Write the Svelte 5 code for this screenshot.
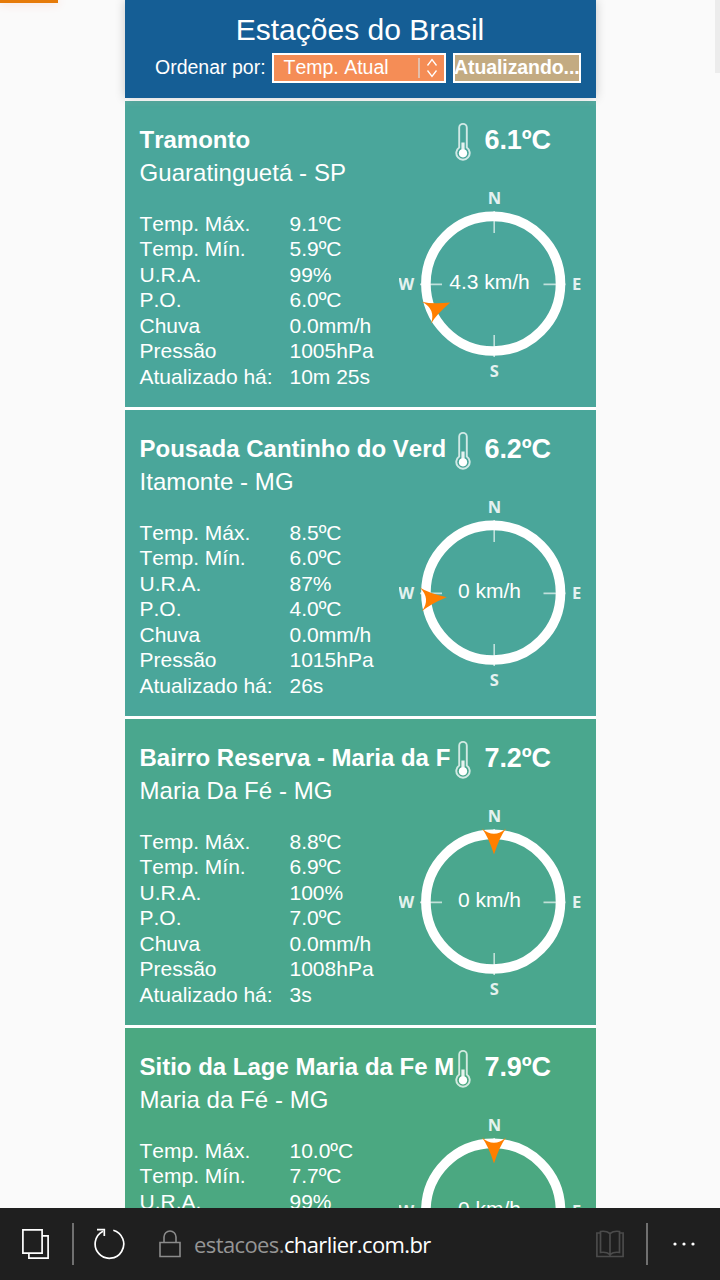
<svelte:head>
    <title>Estações do Brasil</title>
</svelte:head>

<script>
 const url = { sub: 'estacoes.', domain: 'charlier.com.br' };

 let order = 'Temp. Atual';

 // wind is in degrees, 0 = north
 const stations = [
     {
         name: 'Tramonto',
         city: 'Guaratinguetá - SP',
         temp: '6.1ºC',
         color: '#4aa69b',
         wind: 247,
         speed: '4.3 km/h',
         rows: [
             ['Temp. Máx.', '9.1ºC'],
             ['Temp. Mín.', '5.9ºC'],
             ['U.R.A.', '99%'],
             ['P.O.', '6.0ºC'],
             ['Chuva', '0.0mm/h'],
             ['Pressão', '1005hPa'],
             ['Atualizado há:', '10m 25s']
         ]
     },
     {
         name: 'Pousada Cantinho do Verd',
         city: 'Itamonte - MG',
         temp: '6.2ºC',
         color: '#4aa69a',
         wind: 265,
         speed: '0 km/h',
         rows: [
             ['Temp. Máx.', '8.5ºC'],
             ['Temp. Mín.', '6.0ºC'],
             ['U.R.A.', '87%'],
             ['P.O.', '4.0ºC'],
             ['Chuva', '0.0mm/h'],
             ['Pressão', '1015hPa'],
             ['Atualizado há:', '26s']
         ]
     },
     {
         name: 'Bairro Reserva - Maria da F',
         city: 'Maria Da Fé - MG',
         temp: '7.2ºC',
         color: '#4aa78e',
         wind: 0,
         speed: '0 km/h',
         rows: [
             ['Temp. Máx.', '8.8ºC'],
             ['Temp. Mín.', '6.9ºC'],
             ['U.R.A.', '100%'],
             ['P.O.', '7.0ºC'],
             ['Chuva', '0.0mm/h'],
             ['Pressão', '1008hPa'],
             ['Atualizado há:', '3s']
         ]
     },
     {
         name: 'Sitio da Lage Maria da Fe M',
         city: 'Maria da Fé - MG',
         temp: '7.9ºC',
         color: '#4ba881',
         wind: 0,
         speed: '0 km/h',
         rows: [
             ['Temp. Máx.', '10.0ºC'],
             ['Temp. Mín.', '7.7ºC'],
             ['U.R.A.', '99%']
         ]
     }
 ];
</script>

<div class="screen">
    <div class="page">
        <div class="progress"></div>
        <div class="scrollbar"></div>
        <div class="content">
            <header>
                <h1>Estações do Brasil</h1>
                <div class="controls">
                    <span class="label">Ordenar por:</span>
                    <div class="select">
                        <span>{order}</span>
                        <svg width="22" height="22" viewBox="0 0 22 22" fill="none">
                            <path d="M1 1V21" stroke="#ddd5d0" stroke-width="1.4" />
                            <path d="M9.5 8.5L14 2.500L18.500 8.500M9.500 13.500L14 19.500L18.500 13.500" stroke="#fff" stroke-width="1.300" />
                        </svg>
                    </div>
                    <button>Atualizando...</button>
                </div>
            </header>

            {#each stations as station}
                <section class="card" style="background-color: {station.color}">
                    <div class="info">
                        <h2>{station.name}</h2>
                        <p class="city">{station.city}</p>
                        <dl>
                            {#each station.rows as [label, value]}
                                <dt>{label}</dt>
                                <dd>{value}</dd>
                            {/each}
                        </dl>
                    </div>
                    <div class="now">
                        <div class="temp">
                            <svg width="16" height="40" viewBox="0 0 16 40">
                                <path d="M4.200 25.500V5.700a3.800 3.800 0 0 1 7.600 0V25.500a6.700 6.700 0 1 1-7.600 0z" fill="none" stroke="#fff" stroke-opacity="0.75" stroke-width="1.900" />
                                <path d="M8 20.500V30" stroke="#fff" stroke-opacity="0.85" stroke-width="3.200" />
                                <circle cx="8" cy="31.300" r="4.100" fill="#fff" />
                            </svg>
                            <strong>{station.temp}</strong>
                        </div>
                        <svg class="compass" width="190" height="200" viewBox="-95 -100 190 200">
                            <circle cx="-0.800" cy="-0.300" r="67.300" fill="none" stroke="#fff" stroke-width="9.600" />
                            <path d="M0.200 -73V-51M0.200 51V73M-74 0.400H-52M49.500 0.400H71.500" stroke="#fff" stroke-opacity="0.65" stroke-width="1.600" />
                            <g class="points">
                                <text x="0.500" y="-80">N</text>
                                <text x="0.300" y="92.700">S</text>
                                <text x="-87.800" y="5.700">W</text>
                                <text x="82.500" y="5.700">E</text>
                            </g>
                            <path d="M-12 -73.500Q0 -63 12 -73.500Q5.500 -65 0 -47.500Q-5.500 -65 -12 -73.500z" fill="#ff7f00" transform="rotate({station.wind})" />
                            <text class="speed" x="-4.500" y="5.200">{station.speed}</text>
                        </svg>
                    </div>
                </section>
            {/each}
        </div>
    </div>

    <nav>
        <svg class="tabs" width="30" height="34" viewBox="0 0 30 34" fill="none" stroke="#fff" stroke-width="1.700">
            <path d="M1.900 2.900H21.100V26.100H1.900z" />
            <path d="M21 8.900H27.100V31.100H7.900V26.500" />
        </svg>
        <span class="divider"></span>
        <svg class="reload" width="34" height="34" viewBox="0 0 34 34" fill="none" stroke="#fff" stroke-width="1.700">
            <path d="M21.300 3.200A14.300 14.300 0 1 1 11 4.200" />
            <path d="M5 2.600H12.300V9" />
        </svg>
        <svg class="lock" width="24" height="30" viewBox="0 0 24 30" fill="none" stroke="#8b8b8b" stroke-width="1.600">
            <path d="M2 13.500H22V27.500H2z" />
            <path d="M6 13.500V8a6 6 0 0 1 12 0v5.500" />
        </svg>
        <span class="url">{url.sub}<b>{url.domain}</b></span>
        <svg class="book" width="30" height="30" viewBox="0 0 30 30" fill="none" stroke="#4b4b4b" stroke-width="1.700">
            <path d="M5 4H1.900V27.500H28.100V4H25" />
            <path d="M15 4.500Q11 1.500 5.500 2.500V23.500Q11 22.500 15 25.500Q19 22.500 24.500 23.500V2.500Q19 1.500 15 4.500zV27" />
        </svg>
        <span class="divider"></span>
        <svg class="more" width="24" height="6" viewBox="0 0 24 6" fill="#fff">
            <circle cx="3" cy="3" r="1.600" />
            <circle cx="12" cy="3" r="1.600" />
            <circle cx="21" cy="3" r="1.600" />
        </svg>
    </nav>
</div>

<style>
 :global(body) {
     margin: 0;
 }

 .screen {
     width: 720px;
     height: 1280px;
     display: flex;
     flex-direction: column;
     overflow: hidden;
     font-family: "Liberation Sans", Arial, sans-serif;
     font-kerning: none;
     color: #fff;
 }

 .page {
     position: relative;
     height: 1208px;
     background: #fafafa;
     overflow: hidden;
 }

 .progress {
     position: absolute;
     top: 0;
     left: 0;
     width: 58px;
     height: 3px;
     background: #e67a08;
     box-shadow: 0 0 10px rgba(255, 60, 0, 0.25);
 }

 .scrollbar {
     position: absolute;
     top: 0;
     right: 0;
     width: 5px;
     height: 73px;
     background: #ececec;
 }

 .content {
     width: 471px;
     margin-left: 125px;
     display: flex;
     flex-direction: column;
     gap: 3px;
     background: #fff;
 }

 header {
     position: relative;
     height: 98px;
     background: #155e95;
     box-shadow: 0 0 10px rgba(0, 0, 0, 0.2);
 }

 h1 {
     margin: 0;
     padding: 9px 1px 0 0;
     font-size: 30px;
     font-weight: normal;
     line-height: 41px;
     text-align: center;
 }

 .controls {
     display: flex;
     align-items: center;
     margin: 3px 0 0 30px;
     height: 30px;
     font-size: 19.5px;
     line-height: 24px;
 }

 .label {
     width: 117px;
     padding-bottom: 2px;
     white-space: nowrap;
 }

 .select {
     box-sizing: border-box;
     width: 174px;
     height: 30px;
     padding: 0 4px 0 9.5px;
     border: 2px solid #fff;
     background: #f58d56;
     display: flex;
     align-items: center;
     justify-content: space-between;
 }

 .select span {
     padding-bottom: 2px;
 }

 button {
     box-sizing: border-box;
     width: 128px;
     height: 30px;
     margin-left: 7px;
     padding: 0 0 2px;
     border: 2px solid #fff;
     background: #c3ab82;
     color: #fff;
     font: bold 19.5px "Liberation Sans", Arial, sans-serif;
     letter-spacing: -0.08px;
     text-indent: -1px;
     white-space: nowrap;
 }

 .card {
     display: flex;
     height: 306px;
     flex-shrink: 0;
 }

 header + .card {
     box-shadow: inset 0 6px 6px -4px rgba(255, 255, 255, 0.12);
 }

 .info {
     width: 269px;
     padding: 22px 0 0 14.5px;
     white-space: nowrap;
 }

 h2,
 .city {
     margin: 0;
     font-size: 24px;
     line-height: 33px;
 }

 .city {
     letter-spacing: 0.06px;
 }

 dl {
     display: grid;
     grid-template-columns: 150px 1fr;
     grid-auto-rows: 25.5px;
     margin: 21.8px 0 0;
     font-size: 21px;
     line-height: 25.5px;
 }

 dd {
     margin: 0;
 }

 .now {
     width: 190px;
     margin-left: -9px;
     flex-shrink: 0;
     padding-top: 21px;
 }

 .temp {
     display: flex;
     align-items: flex-start;
     height: 40px;
     margin-left: 55px;
     gap: 14px;
 }

 .temp strong {
     font-size: 27px;
     line-height: 37px;
     letter-spacing: -0.1px;
 }

 .compass {
     display: block;
     margin: 22px 0 0 -0.5px;
 }

 .points {
     fill: #fff;
     font: 700 16.5px "Open Sans", sans-serif;
     text-anchor: middle;
     opacity: 0.85;
 }

 .speed {
     fill: #fff;
     font-size: 21px;
     text-anchor: middle;
 }

 nav {
     height: 72px;
     flex-shrink: 0;
     display: flex;
     align-items: center;
     background: #1f1f1f;
 }

 .tabs {
     margin-left: 21px;
 }

 .divider {
     width: 2px;
     height: 42px;
     margin-left: 21px;
     background: #707070;
 }

 .reload {
     margin-left: 18px;
 }

 .lock {
     margin-left: 32px;
 }

 .url {
     width: 401px;
     margin-left: 12px;
     padding-bottom: 1px;
     font: 22px "Open Sans", "Segoe UI", sans-serif;
     letter-spacing: -0.6px;
     color: #959595;
 }

 .url b {
     font-weight: normal;
     color: #fff;
 }

 .more {
     margin-left: 24px;
 }
</style>
